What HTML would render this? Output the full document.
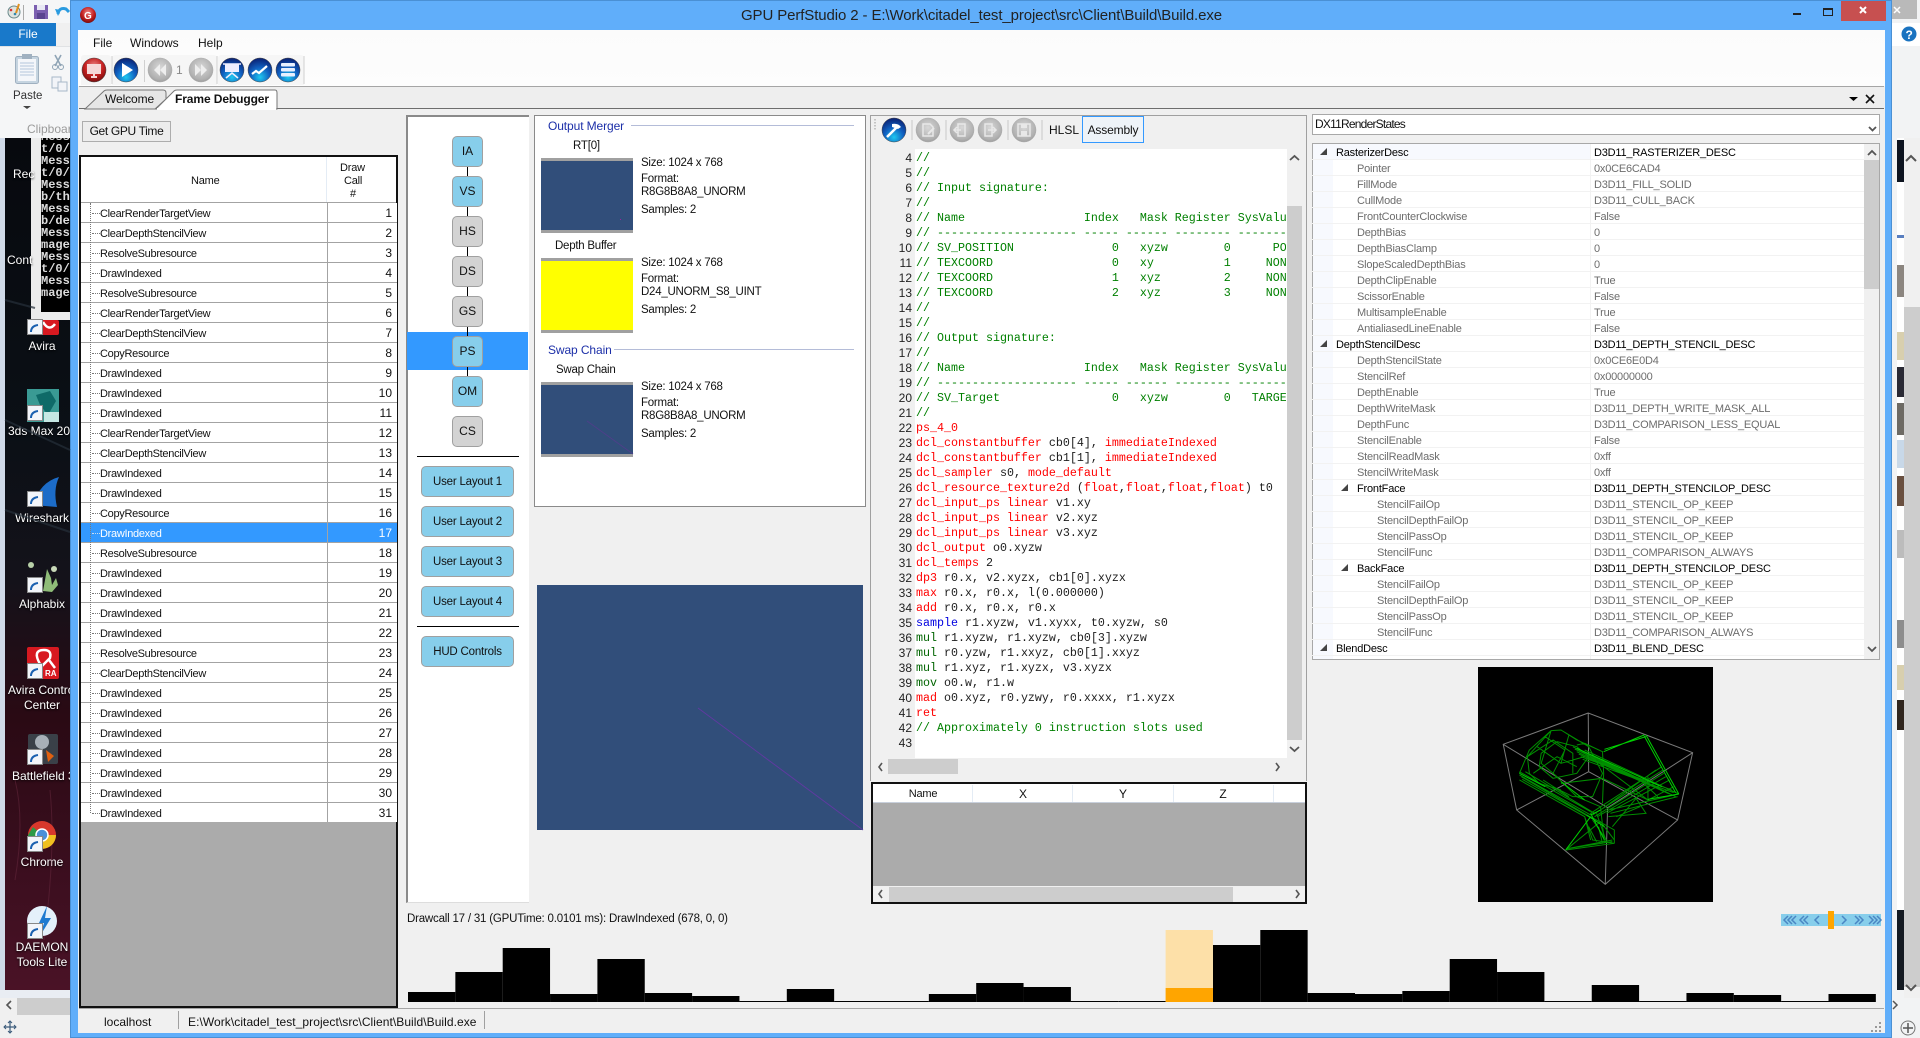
<!DOCTYPE html>
<html><head><meta charset="utf-8"><title>GPU PerfStudio 2</title>
<style>
html,body{margin:0;padding:0;width:1920px;height:1038px;overflow:hidden;background:#f0f0f0}
body{position:relative;font:11px/14px "Liberation Sans",sans-serif;color:#111}
div,span.t,pre,svg{position:absolute}
.t{white-space:nowrap;position:absolute;line-height:14px}
.w{color:#fff;width:70px;text-align:center;font-size:12px;left:7px;text-shadow:0 1px 2px #000}
.rw{position:absolute;left:0;width:316px;height:19px;border-bottom:1px solid #a3a3a3;letter-spacing:-.3px}
.rw b{font-weight:normal;position:absolute;left:19px;top:4px;white-space:nowrap}
.rw i{font-style:normal;position:absolute;right:5px;top:3px;font-size:12px;letter-spacing:0}
.rw u{position:absolute;left:11px;top:10px;width:8px;border-top:1px dotted #777}
.sel{background:#3399ff}
.nd{position:absolute;left:452px;width:29px;height:29px;border:1px solid #a0a0a0;border-radius:5px;background:#87ceeb;text-align:center;line-height:29px;font-size:12px}
.gy{background:#d3d3d3}
.ul{position:absolute;left:421px;width:91px;height:29px;border:1px solid #a0a0a0;border-radius:5px;background:#87ceeb;text-align:center;line-height:31px;font-size:11.5px;letter-spacing:-.2px}
.th{position:absolute;left:541px;width:92px;height:69px;border-top:3px solid #a0a0a0;border-bottom:3px solid #a0a0a0;background:#314e7a}
.inf{letter-spacing:-.25px;font-size:11.5px}
.hd{color:#1c2fa8;font-size:12px;letter-spacing:-.1px}
pre{margin:0;font:11.67px/15px "Liberation Mono",monospace;color:#1d1d1d;overflow:hidden}
.c{color:#008000}.r{color:#f00}.b{color:#0000e0}.g{color:#006400}
.pr{position:absolute;left:0;width:552px;height:15px;border-bottom:1px solid #f2f2f2}
.pr b,.pr i{font-weight:normal;font-style:normal;position:absolute;top:2px;white-space:nowrap;letter-spacing:-.2px;color:#6d6d6d}
.pr i{left:282px}
.pr.k b,.pr.k i{color:#000}
.pr b{left:45px}.pr.k b{left:24px}.pr.k.s b{left:45px}.pr.d b{left:65px}
.ar{position:absolute;width:0;height:0;border-style:solid;border-width:0 0 7px 7px;border-color:transparent transparent #444 transparent}
.co{position:absolute;top:0;text-align:center;width:100px;line-height:20px;font-size:12px}
</style></head><body>

<!-- right side background window -->
<div style="left:1892px;top:0;width:28px;height:1038px;background:#f2f3f4"></div>
<div style="left:1892px;top:0;width:25px;height:19px;background:#b9b9b9"></div>
<div style="left:1892px;top:23px;width:28px;height:23px;background:#fff"></div>
<div style="left:1897px;top:138px;width:7px;height:852px;background:#fff"></div>
<div style="left:1897px;top:140px;width:7px;height:42px;background:#0d1420"></div>
<div style="left:1897px;top:235px;width:7px;height:3px;background:#5a7fc0"></div>
<div style="left:1897px;top:265px;width:7px;height:32px;background:#8c8680"></div>
<div style="left:1897px;top:332px;width:7px;height:28px;background:#d8cfae"></div>
<div style="left:1897px;top:367px;width:7px;height:30px;background:#2a2a35"></div>
<div style="left:1897px;top:403px;width:7px;height:32px;background:#6d6a64"></div>
<div style="left:1897px;top:440px;width:7px;height:28px;background:#c8d8e8"></div>
<div style="left:1897px;top:476px;width:7px;height:30px;background:#6a5040"></div>
<div style="left:1897px;top:530px;width:7px;height:28px;background:#bcbcbc"></div>
<div style="left:1897px;top:620px;width:7px;height:28px;background:#8d8d8d"></div>
<div style="left:1897px;top:665px;width:7px;height:25px;background:#d8cfae"></div>
<div style="left:1897px;top:700px;width:7px;height:30px;background:#30261e"></div>
<div style="left:1897px;top:910px;width:7px;height:80px;background:#141a22"></div>
<div style="left:1904px;top:138px;width:16px;height:860px;background:#f0f0f0"></div>
<div style="left:1904px;top:307px;width:16px;height:680px;background:#cdcdcd"></div>

<!-- left background window -->
<div style="left:0;top:0;width:70px;height:1038px;background:#f0f0f0"></div>
<div style="left:0;top:0;width:70px;height:23px;background:#f5f6f7"></div>
<div style="left:0;top:23px;width:56px;height:23px;background:#1979ca;color:#fff;text-align:center;line-height:23px;font-size:12px">File</div>
<div style="left:0;top:46px;width:70px;height:92px;background:#f5f6f7;border-top:1px solid #e0e2e4;box-sizing:border-box"></div>
<span class="t" style="left:13px;top:89px;font-size:11.5px;color:#333">Paste</span>
<span class="t" style="left:27px;top:122px;font-size:12px;color:#9a9a9a;width:43px;overflow:hidden">Clipboard</span>
<div style="left:0;top:138px;width:5px;height:852px;background:#d0dae8"></div>
<div style="left:5px;top:138px;width:65px;height:852px;background:linear-gradient(180deg,#07090e 0,#0b1016 35%,#14121a 52%,#2a0a14 68%,#3a0e1e 85%,#4a1226 100%)"></div>
<div style="left:31px;top:138px;width:39px;height:182px;background:#ececec"></div>
<div style="left:41px;top:138px;width:29px;height:174px;background:#000;overflow:hidden">
<pre style="left:0;top:-7px;width:29px;height:190px;color:#ddd;font:bold 12px/12px 'Liberation Mono',monospace">Mess
t/0/
Mess
t/0/
Mess
b/th
Mess
b/de
Mess
mage
Mess
t/0/
Mess
mage</pre></div>
<span class="t w" style="left:13px;top:167px;width:auto">Rec</span>
<span class="t w" style="left:7px;top:253px;width:auto">Cont</span>
<span class="t w" style="top:339px">Avira</span>
<div style="left:0;top:424px;width:70px;height:15px;overflow:hidden"><span class="t w" style="top:0;left:8px;width:auto">3ds Max 2015</span></div>
<span class="t w" style="top:511px">Wireshark</span>
<span class="t w" style="top:597px">Alphabix</span>
<div style="left:0;top:683px;width:70px;height:30px;overflow:hidden"><span class="t w" style="top:0;left:8px;width:auto">Avira Control</span><span class="t w" style="top:15px;left:7px">Center</span></div>
<div style="left:0;top:769px;width:70px;height:15px;overflow:hidden"><span class="t w" style="top:0;left:12px;width:auto">Battlefield 3</span></div>
<span class="t w" style="top:855px">Chrome</span>
<span class="t w" style="top:940px">DAEMON</span>
<span class="t w" style="top:955px">Tools Lite</span>
<div style="left:0;top:990px;width:70px;height:8px;background:#e9edf3"></div>
<div style="left:17px;top:998px;width:53px;height:17px;background:#cdcdcd"></div>

<!-- app window -->
<div style="left:70px;top:0;width:1822px;height:1038px;background:#60aefa;border:1px solid #4a90d4;box-sizing:border-box"></div>
<span class="t" style="left:741px;top:9px;font-size:15px;letter-spacing:-.11px;color:#222">GPU PerfStudio 2 - E:\Work\citadel_test_project\src\Client\Build\Build.exe</span>
<div style="left:1841px;top:1px;width:45px;height:20px;background:#c75050"></div>
<div style="left:78px;top:30px;width:1807px;height:1003px;background:#f0f0f0"></div>
<div style="left:78px;top:30px;width:1807px;height:56px;background:linear-gradient(180deg,#fbfbfb,#fdfdfd)"></div>
<span class="t" style="left:93px;top:36px;font-size:12px">File</span>
<span class="t" style="left:130px;top:36px;font-size:12px">Windows</span>
<span class="t" style="left:198px;top:36px;font-size:12px">Help</span>
<div style="left:81px;top:55px;width:30px;height:30px;background:#f5f5f5;border-radius:3px 3px 0 0"></div>
<div style="left:112px;top:55px;width:105px;height:30px;background:#f6f6f6;border-radius:3px 3px 0 0"></div>
<div style="left:218px;top:55px;width:86px;height:30px;background:#f6f6f6;border-radius:3px 3px 0 0"></div>
<span class="t" style="left:176px;top:63px;font-size:12px;color:#888">1</span>

<!-- tab bar -->
<div style="left:79px;top:86px;width:1805px;height:23px;background:#eeeeee;border-top:1px solid #a5a5a5;border-bottom:1px solid #6d6d6d;box-sizing:border-box"></div>
<svg style="left:78px;top:85px" width="220" height="26"><path d="M7 24 L26 6 Q27 5 29 5 H85 Q88 5 88 8 V14 L77 24Z" fill="#e6e6e6" stroke="#777"/><path d="M78 24 L96 6 Q97 5 99 5 H197 Q199 5 199 8 V24Z" fill="#fff" stroke="#777"/><path d="M79 24H198" stroke="#fff" stroke-width="2"/></svg>
<span class="t" style="left:105px;top:92px;font-size:12px;letter-spacing:-.1px">Welcome</span>
<span class="t" style="left:175px;top:92px;font-size:12px;font-weight:bold;letter-spacing:-.1px">Frame Debugger</span>
<div style="left:82px;top:121px;width:87px;height:19px;background:#ededed;border:1px solid #adadad;text-align:center;line-height:19px;font-size:12px;letter-spacing:-.35px">Get GPU Time</div>

<!-- draw call table -->
<div style="left:79px;top:155px;width:319px;height:853px;box-sizing:border-box;border:2px solid #111;background:#ababab"></div>
<div style="left:81px;top:157px;width:315px;height:45px;background:#fff;border-bottom:1px solid #a3a3a3"></div>
<div style="left:326px;top:157px;width:1px;height:45px;background:#e4ecf5"></div>
<span class="t" style="left:191px;top:174px;letter-spacing:-.2px">Name</span>
<span class="t" style="left:340px;top:161px;letter-spacing:-.2px">Draw</span>
<span class="t" style="left:344px;top:174px;letter-spacing:-.2px">Call</span>
<span class="t" style="left:350px;top:187px">#</span>
<div style="left:81px;top:203px;width:316px;height:619px;background:#fff">
<div class="rw" style="top:0"><u></u><b>ClearRenderTargetView</b><i>1</i></div>
<div class="rw" style="top:20px"><u></u><b>ClearDepthStencilView</b><i>2</i></div>
<div class="rw" style="top:40px"><u></u><b>ResolveSubresource</b><i>3</i></div>
<div class="rw" style="top:60px"><u></u><b>DrawIndexed</b><i>4</i></div>
<div class="rw" style="top:80px"><u></u><b>ResolveSubresource</b><i>5</i></div>
<div class="rw" style="top:100px"><u></u><b>ClearRenderTargetView</b><i>6</i></div>
<div class="rw" style="top:120px"><u></u><b>ClearDepthStencilView</b><i>7</i></div>
<div class="rw" style="top:140px"><u></u><b>CopyResource</b><i>8</i></div>
<div class="rw" style="top:160px"><u></u><b>DrawIndexed</b><i>9</i></div>
<div class="rw" style="top:180px"><u></u><b>DrawIndexed</b><i>10</i></div>
<div class="rw" style="top:200px"><u></u><b>DrawIndexed</b><i>11</i></div>
<div class="rw" style="top:220px"><u></u><b>ClearRenderTargetView</b><i>12</i></div>
<div class="rw" style="top:240px"><u></u><b>ClearDepthStencilView</b><i>13</i></div>
<div class="rw" style="top:260px"><u></u><b>DrawIndexed</b><i>14</i></div>
<div class="rw" style="top:280px"><u></u><b>DrawIndexed</b><i>15</i></div>
<div class="rw" style="top:300px"><u></u><b>CopyResource</b><i>16</i></div>
<div class="rw sel" style="top:320px;color:#fff"><u style="border-color:#cde"></u><b>DrawIndexed</b><i>17</i></div>
<div class="rw" style="top:340px"><u></u><b>ResolveSubresource</b><i>18</i></div>
<div class="rw" style="top:360px"><u></u><b>DrawIndexed</b><i>19</i></div>
<div class="rw" style="top:380px"><u></u><b>DrawIndexed</b><i>20</i></div>
<div class="rw" style="top:400px"><u></u><b>DrawIndexed</b><i>21</i></div>
<div class="rw" style="top:420px"><u></u><b>DrawIndexed</b><i>22</i></div>
<div class="rw" style="top:440px"><u></u><b>ResolveSubresource</b><i>23</i></div>
<div class="rw" style="top:460px"><u></u><b>ClearDepthStencilView</b><i>24</i></div>
<div class="rw" style="top:480px"><u></u><b>DrawIndexed</b><i>25</i></div>
<div class="rw" style="top:500px"><u></u><b>DrawIndexed</b><i>26</i></div>
<div class="rw" style="top:520px"><u></u><b>DrawIndexed</b><i>27</i></div>
<div class="rw" style="top:540px"><u></u><b>DrawIndexed</b><i>28</i></div>
<div class="rw" style="top:560px"><u></u><b>DrawIndexed</b><i>29</i></div>
<div class="rw" style="top:580px"><u></u><b>DrawIndexed</b><i>30</i></div>
<div class="rw" style="top:600px;border-bottom:0"><u></u><b>DrawIndexed</b><i>31</i></div>
<div style="left:246px;top:0;width:1px;height:619px;background:#a3a3a3"></div>
<div style="left:9px;top:0;width:0;height:610px;border-left:1px dotted #777"></div>
</div>

<!-- pipeline -->
<div style="left:406px;top:115px;width:123px;height:788px;box-sizing:border-box;background:#fff;border-left:2px solid #8a8a8a;border-top:2px solid #8a8a8a;border-bottom:1px solid #ddd"></div>
<div style="left:407px;top:332px;width:121px;height:38px;background:#3399ff"></div>
<div style="left:467px;top:167px;width:1px;height:209px;background:#000"></div>
<div class="nd" style="top:136px">IA</div>
<div class="nd" style="top:176px">VS</div>
<div class="nd gy" style="top:216px">HS</div>
<div class="nd gy" style="top:256px">DS</div>
<div class="nd gy" style="top:296px">GS</div>
<div class="nd" style="top:336px">PS</div>
<div class="nd" style="top:376px">OM</div>
<div class="nd gy" style="top:416px">CS</div>
<div style="left:417px;top:456px;width:102px;height:1px;background:#000"></div>
<div class="ul" style="top:466px">User Layout 1</div>
<div class="ul" style="top:506px">User Layout 2</div>
<div class="ul" style="top:546px">User Layout 3</div>
<div class="ul" style="top:586px">User Layout 4</div>
<div style="left:417px;top:626px;width:102px;height:1px;background:#000"></div>
<div class="ul" style="top:636px">HUD Controls</div>

<!-- stage panel -->
<div style="left:534px;top:115px;width:332px;height:392px;box-sizing:border-box;background:#fff;border:1px solid #8a8a8a"></div>
<span class="t hd" style="left:548px;top:119px">Output Merger</span>
<div style="left:631px;top:125px;width:223px;height:1px;background:#b4bcd8"></div>
<span class="t" style="left:573px;top:139px;font-size:11.5px;letter-spacing:-.2px">RT[0]</span>
<div class="th" style="top:158px"></div>
<span class="t inf" style="left:641px;top:156px">Size: 1024 x 768</span>
<span class="t inf" style="left:641px;top:172px">Format:</span>
<span class="t inf" style="left:641px;top:185px">R8G8B8A8_UNORM</span>
<span class="t inf" style="left:641px;top:203px">Samples: 2</span>
<span class="t inf" style="left:555px;top:239px">Depth Buffer</span>
<div class="th" style="top:258px;background:#ffff00"></div>
<span class="t inf" style="left:641px;top:256px">Size: 1024 x 768</span>
<span class="t inf" style="left:641px;top:272px">Format:</span>
<span class="t inf" style="left:641px;top:285px">D24_UNORM_S8_UINT</span>
<span class="t inf" style="left:641px;top:303px">Samples: 2</span>
<span class="t hd" style="left:548px;top:343px">Swap Chain</span>
<div style="left:614px;top:349px;width:240px;height:1px;background:#b4bcd8"></div>
<span class="t inf" style="left:556px;top:363px">Swap Chain</span>
<div class="th" style="top:382px"></div>
<span class="t inf" style="left:641px;top:380px">Size: 1024 x 768</span>
<span class="t inf" style="left:641px;top:396px">Format:</span>
<span class="t inf" style="left:641px;top:409px">R8G8B8A8_UNORM</span>
<span class="t inf" style="left:641px;top:427px">Samples: 2</span>
<div style="left:537px;top:585px;width:326px;height:245px;background:#314e7a"></div>

<!-- code panel -->
<div style="left:870px;top:115px;width:437px;height:666px;box-sizing:border-box;border:1px solid #a0a0a0;border-bottom:0;background:#f0f0f0"></div>
<span class="t" style="left:1049px;top:123px;font-size:12px">HLSL</span>
<div style="left:1082px;top:116px;width:60px;height:25px;border:1px solid #3399ff;background:#eef3f8;text-align:center;line-height:27px;font-size:12px;letter-spacing:-.15px">Assembly</div>
<div style="left:915px;top:149px;width:372px;height:609px;background:#fff"></div>
<div style="left:1287px;top:206px;width:15px;height:534px;background:#cdcdcd"></div>
<pre style="left:878px;top:150.5px;width:34px;height:600px;text-align:right;font:12px/15px 'Liberation Sans',sans-serif;color:#222">4
5
6
7
8
9
10
11
12
13
14
15
16
17
18
19
20
21
22
23
24
25
26
27
28
29
30
31
32
33
34
35
36
37
38
39
40
41
42
43</pre>
<pre style="left:916px;top:150.5px;width:370px;height:600px"><span class="c">//
//
// Input signature:
//
// Name                 Index   Mask Register SysValue Format
// -------------------- ----- ------ -------- -------- ------
// SV_POSITION              0   xyzw        0      POS  float
// TEXCOORD                 0   xy          1     NONE  float
// TEXCOORD                 1   xyz         2     NONE  float
// TEXCOORD                 2   xyz         3     NONE  float
//
//
// Output signature:
//
// Name                 Index   Mask Register SysValue Format
// -------------------- ----- ------ -------- -------- ------
// SV_Target                0   xyzw        0   TARGET  float
//</span>
<span class="r">ps_4_0</span>
<span class="r">dcl_constantbuffer</span> cb0[4], <span class="r">immediateIndexed</span>
<span class="r">dcl_constantbuffer</span> cb1[1], <span class="r">immediateIndexed</span>
<span class="r">dcl_sampler</span> s0, <span class="r">mode_default</span>
<span class="r">dcl_resource_texture2d</span> (<span class="r">float</span>,<span class="r">float</span>,<span class="r">float</span>,<span class="r">float</span>) t0
<span class="r">dcl_input_ps linear</span> v1.xy
<span class="r">dcl_input_ps linear</span> v2.xyz
<span class="r">dcl_input_ps linear</span> v3.xyz
<span class="r">dcl_output</span> o0.xyzw
<span class="r">dcl_temps</span> 2
<span class="r">dp3</span> r0.x, v2.xyzx, cb1[0].xyzx
<span class="r">max</span> r0.x, r0.x, l(0.000000)
<span class="r">add</span> r0.x, r0.x, r0.x
<span class="b">sample</span> r1.xyzw, v1.xyxx, t0.xyzw, s0
<span class="g">mul</span> r1.xyzw, r1.xyzw, cb0[3].xyzw
<span class="g">mul</span> r0.yzw, r1.xxyz, cb0[1].xxyz
<span class="g">mul</span> r1.xyz, r1.xyzx, v3.xyzx
<span class="g">mov</span> o0.w, r1.w
<span class="r">mad</span> o0.xyz, r0.yzwy, r0.xxxx, r1.xyzx
<span class="r">ret</span>
<span class="c">// Approximately 0 instruction slots used</span></pre>
<div style="left:888px;top:759px;width:70px;height:15px;background:#cdcdcd"></div>

<!-- watch table -->
<div style="left:871px;top:782px;width:436px;height:122px;box-sizing:border-box;border:2px solid #111;background:#ababab"></div>
<div style="left:873px;top:784px;width:432px;height:19px;background:#fff;border-bottom:1px solid #c8d0dc;box-sizing:border-box"></div>
<div class="co" style="left:873px;top:784px;font-size:11px;letter-spacing:-.2px">Name</div>
<div class="co" style="left:973px;top:784px">X</div>
<div class="co" style="left:1073px;top:784px">Y</div>
<div class="co" style="left:1173px;top:784px">Z</div>
<div style="left:972px;top:785px;width:1px;height:17px;background:#e4ecf5"></div>
<div style="left:1072px;top:785px;width:1px;height:17px;background:#e4ecf5"></div>
<div style="left:1173px;top:785px;width:1px;height:17px;background:#e4ecf5"></div>
<div style="left:1273px;top:785px;width:1px;height:17px;background:#e4ecf5"></div>
<div style="left:873px;top:886px;width:432px;height:16px;background:#f0f0f0"></div>
<div style="left:889px;top:887px;width:344px;height:15px;background:#cdcdcd"></div>

<!-- props -->
<div style="left:1312px;top:114px;width:568px;height:21px;box-sizing:border-box;border:1px solid #a8a8a8;background:#fff;padding-left:2px;line-height:18px;font-size:12px;letter-spacing:-.78px">DX11RenderStates</div>
<div style="left:1312px;top:143px;width:568px;height:517px;box-sizing:border-box;border:1px solid #a8a8a8;background:#fff"></div>
<div style="left:1313px;top:144px;width:20px;height:515px;background:#f7f9fe"></div>
<div style="left:1333px;top:144px;width:258px;height:16px;background:#f7f9fe"></div>
<div style="left:1864px;top:144px;width:15px;height:515px;background:#f0f0f0"></div>
<div style="left:1864px;top:160px;width:15px;height:129px;background:#cdcdcd"></div>
<div style="left:1312px;top:144px;width:552px;height:516px">
<div class="pr k" style="top:0"><b>RasterizerDesc</b><i>D3D11_RASTERIZER_DESC</i></div>
<div class="pr" style="top:16px"><b>Pointer</b><i>0x0CE6CAD4</i></div>
<div class="pr" style="top:32px"><b>FillMode</b><i>D3D11_FILL_SOLID</i></div>
<div class="pr" style="top:48px"><b>CullMode</b><i>D3D11_CULL_BACK</i></div>
<div class="pr" style="top:64px"><b>FrontCounterClockwise</b><i>False</i></div>
<div class="pr" style="top:80px"><b>DepthBias</b><i>0</i></div>
<div class="pr" style="top:96px"><b>DepthBiasClamp</b><i>0</i></div>
<div class="pr" style="top:112px"><b>SlopeScaledDepthBias</b><i>0</i></div>
<div class="pr" style="top:128px"><b>DepthClipEnable</b><i>True</i></div>
<div class="pr" style="top:144px"><b>ScissorEnable</b><i>False</i></div>
<div class="pr" style="top:160px"><b>MultisampleEnable</b><i>True</i></div>
<div class="pr" style="top:176px"><b>AntialiasedLineEnable</b><i>False</i></div>
<div class="pr k" style="top:192px"><b>DepthStencilDesc</b><i>D3D11_DEPTH_STENCIL_DESC</i></div>
<div class="pr" style="top:208px"><b>DepthStencilState</b><i>0x0CE6E0D4</i></div>
<div class="pr" style="top:224px"><b>StencilRef</b><i>0x00000000</i></div>
<div class="pr" style="top:240px"><b>DepthEnable</b><i>True</i></div>
<div class="pr" style="top:256px"><b>DepthWriteMask</b><i>D3D11_DEPTH_WRITE_MASK_ALL</i></div>
<div class="pr" style="top:272px"><b>DepthFunc</b><i>D3D11_COMPARISON_LESS_EQUAL</i></div>
<div class="pr" style="top:288px"><b>StencilEnable</b><i>False</i></div>
<div class="pr" style="top:304px"><b>StencilReadMask</b><i>0xff</i></div>
<div class="pr" style="top:320px"><b>StencilWriteMask</b><i>0xff</i></div>
<div class="pr k s" style="top:336px"><b>FrontFace</b><i>D3D11_DEPTH_STENCILOP_DESC</i></div>
<div class="pr d" style="top:352px"><b>StencilFailOp</b><i>D3D11_STENCIL_OP_KEEP</i></div>
<div class="pr d" style="top:368px"><b>StencilDepthFailOp</b><i>D3D11_STENCIL_OP_KEEP</i></div>
<div class="pr d" style="top:384px"><b>StencilPassOp</b><i>D3D11_STENCIL_OP_KEEP</i></div>
<div class="pr d" style="top:400px"><b>StencilFunc</b><i>D3D11_COMPARISON_ALWAYS</i></div>
<div class="pr k s" style="top:416px"><b>BackFace</b><i>D3D11_DEPTH_STENCILOP_DESC</i></div>
<div class="pr d" style="top:432px"><b>StencilFailOp</b><i>D3D11_STENCIL_OP_KEEP</i></div>
<div class="pr d" style="top:448px"><b>StencilDepthFailOp</b><i>D3D11_STENCIL_OP_KEEP</i></div>
<div class="pr d" style="top:464px"><b>StencilPassOp</b><i>D3D11_STENCIL_OP_KEEP</i></div>
<div class="pr d" style="top:480px"><b>StencilFunc</b><i>D3D11_COMPARISON_ALWAYS</i></div>
<div class="pr k" style="top:496px"><b>BlendDesc</b><i>D3D11_BLEND_DESC</i></div>
<div style="left:278px;top:0;width:1px;height:515px;background:#f2f2f2"></div>
</div>
<div class="ar" style="left:1320px;top:148px"></div>
<div class="ar" style="left:1320px;top:340px"></div>
<div class="ar" style="left:1341px;top:484px"></div>
<div class="ar" style="left:1341px;top:564px"></div>
<div class="ar" style="left:1320px;top:644px"></div>

<span class="t" style="left:407px;top:912px;font-size:11.5px;letter-spacing:-.2px">Drawcall 17 / 31 (GPUTime: 0.0101 ms): DrawIndexed (678, 0, 0)</span>

<!-- status bar -->
<div style="left:79px;top:1008px;width:1805px;height:1px;background:#a5a5a5"></div>
<span class="t" style="left:104px;top:1015px;font-size:12px">localhost</span>
<div style="left:178px;top:1011px;width:1px;height:18px;background:#a0a0a0"></div>
<span class="t" style="left:188px;top:1015px;font-size:12px;letter-spacing:.06px">E:\Work\citadel_test_project\src\Client\Build\Build.exe</span>
<div style="left:484px;top:1011px;width:1px;height:18px;background:#a0a0a0"></div>

<!-- graphics overlay -->
<svg style="left:0;top:0" width="1920" height="1038" viewBox="0 0 1920 1038">
<defs>
<radialGradient id="gR" cx=".5" cy=".35" r=".7"><stop offset="0" stop-color="#e88"/><stop offset=".55" stop-color="#c32020"/><stop offset="1" stop-color="#6a0a0a"/></radialGradient>
<radialGradient id="gB" cx=".5" cy=".8" r=".8"><stop offset="0" stop-color="#1ec8f0"/><stop offset=".5" stop-color="#1060c0"/><stop offset="1" stop-color="#0a1f70"/></radialGradient>
<radialGradient id="gG" cx=".5" cy=".4" r=".7"><stop offset="0" stop-color="#d8d8d8"/><stop offset=".7" stop-color="#b0b0b0"/><stop offset="1" stop-color="#8e8e8e"/></radialGradient>
</defs>

<!-- window caption icons -->
<circle cx="88" cy="15" r="8" fill="url(#gR)"/><text x="84" y="19" font-family="Liberation Sans" font-size="10" font-weight="bold" fill="#fff">G</text>
<path d="M1793 14h8" stroke="#222" stroke-width="2" fill="none"/>
<rect x="1823.5" y="8.5" width="9" height="7" fill="none" stroke="#222"/><path d="M1823 9h10" stroke="#222" stroke-width="2"/>
<path d="M1860 7l6 6M1866 7l-6 6" stroke="#fff" stroke-width="2"/>
<path d="M1894 7l6 6M1900 7l-6 6" stroke="#fff" stroke-width="1.5"/>
<circle cx="1909" cy="34" r="7.5" fill="#1a73c0"/><text x="1905.5" y="39" font-family="Liberation Sans" font-size="12" font-weight="bold" fill="#fff">?</text>

<!-- quick access -->
<circle cx="14" cy="12" r="6" fill="#dfe4e0" stroke="#6b8a8c"/><circle cx="11" cy="10" r="1.3" fill="#d33"/><circle cx="15" cy="14" r="1.3" fill="#38a"/><path d="M16 13l3-9" stroke="#e09020" stroke-width="2"/>
<path d="M23.5 5v15" stroke="#aaa"/>
<rect x="34" y="5" width="14" height="14" fill="#7b5fb0"/><rect x="37" y="5" width="8" height="5" fill="#e8e8f4"/><rect x="37" y="13" width="8" height="6" fill="#5a4490"/>
<path d="M58 14q1-7 8-5l3 3" fill="none" stroke="#2a9be0" stroke-width="3"/><path d="M55 9l6 1-3 6z" fill="#2a9be0"/>

<!-- ribbon paste/cut -->
<rect x="15.5" y="56.5" width="23" height="27" rx="2" fill="#c5d4e0" stroke="#9fb0c0"/><rect x="18" y="59" width="18" height="22" fill="#f4f6fa"/><path d="M20 63h14M20 66h14M20 69h14M20 72h14M20 75h14" stroke="#b5c5dc"/><rect x="22" y="54" width="10" height="5" fill="#9fb0c0"/>
<path d="M23 106h8l-4 3z" fill="#444"/>
<path d="M55 55l6 11M61 55l-6 11" stroke="#8fa4b5" stroke-width="1.6"/><circle cx="55" cy="67" r="2.5" fill="none" stroke="#8fa4b5"/><circle cx="61" cy="67" r="2.5" fill="none" stroke="#8fa4b5"/>
<rect x="52" y="77" width="9" height="11" fill="#f2f4f8" stroke="#a8b8c8"/><rect x="58" y="82" width="9" height="9" fill="#f2f4f8" stroke="#a8b8c8"/>
<path d="M11 1001l-4 4 4 4" fill="none" stroke="#555" stroke-width="1.6"/>
<path d="M10 1021v12M4 1027h12" stroke="#3a5a7a" stroke-width="1.2"/><path d="M8 1023l2-2 2 2M8 1031l2 2 2-2M6 1025l-2 2 2 2M14 1025l2 2-2 2" stroke="#3a5a7a" fill="none"/>
<path d="M1893 1001l4 4-4 4" fill="none" stroke="#555" stroke-width="1.5"/>
<circle cx="1908" cy="1028" r="7" fill="none" stroke="#777"/><path d="M1908 1023v10M1903 1028h10" stroke="#555" stroke-width="1.5"/>
<path d="M1906 161l5-5 5 5" fill="none" stroke="#555" stroke-width="2"/>
<path d="M1906 985l5 5 5-5" fill="none" stroke="#555" stroke-width="2"/>

<!-- desktop icons -->
<path d="M5 420l65 30M5 510l65 22M5 300l30 8" stroke="#26303a" stroke-width="2" opacity=".7"/>
<path d="M15 780q10 40 0 100M50 790q6 60-6 150" stroke="#6a2a40" opacity=".5" fill="none"/>
<rect x="27" y="320" width="32" height="15" rx="2" fill="#d71920"/><path d="M43 322q6 10 12 2" stroke="#fff" stroke-width="2.5" fill="none"/>
<rect x="27" y="389" width="32" height="33" fill="#3a9a94"/><path d="M36 395l14-4 6 10-8 14-8-10z" fill="#0f6a68"/><rect x="44" y="412" width="15" height="10" fill="#c6e8e4"/>
<path d="M33 505Q40 482 59 477Q53 490 57 507Z" fill="#1c6cc8"/>
<path d="M43 591L47 569L51 578L52 585L56 578L58 585L52 592Z" fill="#8fbc78"/><circle cx="31" cy="565" r="3" fill="#b8d0a8"/><circle cx="54" cy="569" r="3" fill="#c8d8b8"/>
<rect x="27" y="647" width="32" height="32" rx="2" fill="#d71920"/><path d="M40 664q-8-14 4-14 8 0 6 8l-8 8M49 660l6 8" stroke="#fff" stroke-width="2.5" fill="none"/><text x="45" y="676" font-family="Liberation Sans" font-size="8" font-weight="bold" fill="#fff">RA</text>
<rect x="28" y="734" width="30" height="30" rx="2" fill="#3a4048"/><circle cx="42" cy="742" r="7" fill="#a8b0b8"/><path d="M46 750l8 6-6 6z" fill="#e06010"/>
<circle cx="42" cy="835" r="14" fill="#d8382c"/><path d="M42 835l14 0a14 14 0 0 1-21 12z" fill="#f0c020"/><path d="M42 835l-7 12a14 14 0 0 1-7-12l5-8z" fill="#2c9a48"/><circle cx="42" cy="835" r="6" fill="#4a90d8" stroke="#fff" stroke-width="1.5"/>
<circle cx="42" cy="921" r="15" fill="#e4f0fa"/><path d="M47 906l-8 17h5l-4 13 11-18h-6z" fill="#1f7ad0"/>
<g fill="#f2f5fa" stroke="#888"><rect x="27.5" y="319.5" width="15" height="15"/><rect x="27.5" y="405.5" width="15" height="15"/><rect x="27.5" y="491.5" width="15" height="15"/><rect x="27.5" y="577.5" width="15" height="15"/><rect x="27.5" y="663.5" width="15" height="15"/><rect x="27.5" y="749.5" width="15" height="15"/><rect x="27.5" y="836.5" width="15" height="15"/><rect x="27.5" y="923.5" width="15" height="15"/></g>
<g fill="none" stroke="#1a60b0" stroke-width="2"><path d="M31 332q0-6 7-7M31 418q0-6 7-7M31 504q0-6 7-7M31 590q0-6 7-7M31 676q0-6 7-7M31 762q0-6 7-7M31 849q0-6 7-7M31 936q0-6 7-7"/></g>

<!-- toolbar icons -->
<g stroke="#444" stroke-width=".5">
<circle cx="94" cy="70" r="12" fill="url(#gR)"/>
<circle cx="126" cy="70" r="12" fill="url(#gB)"/>
<circle cx="160" cy="70" r="12" fill="url(#gG)" stroke="#aaa"/>
<circle cx="201" cy="70" r="12" fill="url(#gG)" stroke="#aaa"/>
<circle cx="232" cy="70" r="12" fill="url(#gB)"/>
<circle cx="260" cy="70" r="12" fill="url(#gB)"/>
<circle cx="288" cy="70" r="12" fill="url(#gB)"/>
<circle cx="894" cy="130" r="12" fill="url(#gB)"/>
<circle cx="928" cy="130" r="12" fill="url(#gG)" stroke="#aaa"/>
<circle cx="962" cy="130" r="12" fill="url(#gG)" stroke="#aaa"/>
<circle cx="990" cy="130" r="12" fill="url(#gG)" stroke="#aaa"/>
<circle cx="1024" cy="130" r="12" fill="url(#gG)" stroke="#aaa"/>
</g>
<rect x="87" y="64" width="14" height="10" fill="#f6d8d8"/><path d="M91 77h6M94 74v3" stroke="#f6d8d8" stroke-width="2"/>
<path d="M122 63l11 7-11 7z" fill="#fff"/>
<path d="M160 64l-6 6 6 6zM166 64l-6 6 6 6z" fill="#eee"/>
<path d="M195 64l6 6-6 6zM201 64l6 6-6 6z" fill="#eee"/>
<rect x="225" y="64" width="14" height="8" fill="#eef"/><path d="M223 64h18M226 78l6-5 6 5" stroke="#eef" stroke-width="1.6" fill="none"/>
<path d="M252 74l4-3 3 2 8-7" stroke="#fff" stroke-width="2.2" fill="none"/>
<g fill="#e8f0ff"><rect x="281" y="63" width="14" height="3.5" rx="1"/><rect x="281" y="68" width="14" height="3.5" rx="1"/><rect x="281" y="73" width="14" height="3.5" rx="1"/></g>
<path d="M112 56v28M144.500 60v22M217 56v28M304 56v28" stroke="#d0d0d0"/>
<path d="M887 137l10-10" stroke="#fff" stroke-width="2.5"/><path d="M892 124q6-1 9 3l-3 2-3-1-3-1z" fill="#fff"/>
<path d="M923 124h7l3 3v9h-10z" fill="none" stroke="#e8e8e8" stroke-width="1.5"/><path d="M928 134l6-6" stroke="#e8e8e8" stroke-width="2"/>
<path d="M958 124h7v12h-7zM961 130h-6M957 127l-3 3 3 3" fill="none" stroke="#e8e8e8" stroke-width="1.5"/>
<path d="M985 124h7v12h-7zM988 130h7M993 127l3 3-3 3" fill="none" stroke="#e8e8e8" stroke-width="1.5"/>
<rect x="1018" y="124" width="12" height="12" fill="none" stroke="#e8e8e8" stroke-width="1.5"/><rect x="1021" y="124" width="6" height="4" fill="#e8e8e8"/><rect x="1021" y="131" width="6" height="5" fill="#e8e8e8"/>
<path d="M912 120v20M946 120v20M1008 120v20M1042 120v20" stroke="#c8c8c8"/>
<path d="M875 119v12" stroke="#999" stroke-dasharray="1.5 1.5"/>
<path d="M1849 97h9l-4.500 4z" fill="#000"/><path d="M1866 95l8 8M1874 95l-8 8" stroke="#111" stroke-width="1.6"/>
<g fill="#999"><rect x="1875" y="1030" width="2" height="2"/><rect x="1879" y="1030" width="2" height="2"/><rect x="1879" y="1026" width="2" height="2"/><rect x="1871" y="1030" width="2" height="2"/><rect x="1875" y="1026" width="2" height="2"/><rect x="1879" y="1022" width="2" height="2"/></g>

<!-- thumbs details -->
<rect x="620" y="219" width="1" height="1" fill="#a020a0"/>
<path d="M587 421l46 33" stroke="#4d3f8a" fill="none"/>
<path d="M698 708L863 830" stroke="#5f3aa0" fill="none"/>

<!-- scroll arrows -->
<path d="M1290 160l4.500-4 4.500 4" fill="none" stroke="#555" stroke-width="1.8"/>
<path d="M1290 747l4.500 4 4.500-4" fill="none" stroke="#555" stroke-width="1.8"/>
<path d="M882 763l-3 4 3 4M1276 763l3 4-3 4" fill="none" stroke="#555" stroke-width="1.6"/>
<path d="M882 890l-3 4 3 4M1296 890l3 4-3 4" fill="none" stroke="#555" stroke-width="1.6"/>
<path d="M1868 155l4-4 4 4" fill="none" stroke="#555" stroke-width="1.8"/>
<path d="M1868 647l4 4 4-4" fill="none" stroke="#555" stroke-width="1.8"/>
<path d="M1869 127l3.500 3.500 3.500-3.500" fill="none" stroke="#555" stroke-width="1.8"/>

<!-- histogram -->
<g fill="#000">
<rect x="408" y="992" width="47.35" height="10"/><rect x="455.35" y="972" width="47.35" height="30"/><rect x="502.7" y="948" width="47.35" height="54"/><rect x="550.05" y="994" width="47.35" height="8"/><rect x="597.4" y="959" width="47.35" height="43"/><rect x="644.75" y="993" width="47.35" height="9"/><rect x="692.1" y="996" width="47.35" height="6"/><rect x="739.45" y="1001" width="47.35" height="1"/><rect x="786.8" y="989" width="47.35" height="13"/><rect x="834.15" y="1001" width="47.35" height="1"/><rect x="881.5" y="1001" width="47.35" height="1"/><rect x="928.85" y="994" width="47.35" height="8"/><rect x="976.2" y="983" width="47.35" height="19"/><rect x="1023.55" y="987" width="47.35" height="15"/><rect x="1070.9" y="1001" width="47.35" height="1"/><rect x="1118.25" y="1001" width="47.35" height="1"/>
<rect x="1212.95" y="945" width="47.35" height="57"/><rect x="1260.3" y="930" width="47.35" height="72"/><rect x="1307.65" y="993" width="47.35" height="9"/><rect x="1355" y="994" width="47.35" height="8"/><rect x="1402.35" y="991" width="47.35" height="11"/><rect x="1449.7" y="959" width="47.35" height="43"/><rect x="1497.05" y="972" width="47.35" height="30"/><rect x="1544.4" y="1001" width="47.35" height="1"/><rect x="1591.75" y="985" width="47.35" height="17"/><rect x="1639.1" y="1001" width="47.35" height="1"/><rect x="1686.45" y="993" width="47.35" height="9"/><rect x="1733.8" y="995" width="47.35" height="7"/><rect x="1781.15" y="1001" width="47.35" height="1"/><rect x="1828.5" y="994" width="47.35" height="8"/>
</g>
<rect x="1165.6" y="930" width="47.35" height="58" fill="#fde0a8"/><rect x="1165.6" y="988" width="47.35" height="14" fill="#ffa500"/>

<!-- nav -->
<rect x="1781" y="914" width="100" height="12" fill="#87ceeb"/>
<rect x="1828" y="911" width="6" height="18" fill="#ffa500"/>
<g fill="none" stroke="#4a86c4" stroke-width="1.5">
<path d="M1788 916l-4 4 4 4M1792 916l-4 4 4 4M1796 916l-4 4 4 4M1804 916l-4 4 4 4M1808 916l-4 4 4 4M1819 916l-4 4 4 4M1842 916l4 4-4 4M1855 916l4 4-4 4M1859 916l4 4-4 4M1869 916l4 4-4 4M1873 916l4 4-4 4M1877 916l4 4-4 4"/>
</g>

<!-- 3D view -->
<rect x="1478" y="667" width="235" height="235" fill="#000"/>
<g transform="translate(1300,640) scale(.3954,.3333)" fill="none">
<path vector-effect="non-scaling-stroke" stroke="#7a7a7a" stroke-width="1" d="M729 219L514 313L548 510L772 733L955 540L993 338ZM729 219L730 395L548 510M730 395L955 540M514 313L778 503L993 338M778 503L772 733"/>
<g stroke="#008f00" stroke-width="1">
<path vector-effect="non-scaling-stroke" d="M635 272L660 270L700 300L765 335M635 272L580 330L555 400M635 272L575 350L580 400L605 430L660 450M635 272L610 370L650 410M650 305L610 340L605 380L640 415L700 400L730 350L700 320L650 305M660 270L730 320L765 400L740 470L690 470L640 440M700 315L720 310L765 335L768 400L765 490M575 350L640 300L690 340L690 400M600 320L660 370L720 350M590 400L650 350L700 380M620 290L670 330L640 400M680 285L660 370M615 420L680 470"/>
<path vector-effect="non-scaling-stroke" d="M690 320L915 450M695 327L920 455M700 335L930 460M705 342L935 462M710 350L940 450M715 358L945 458M720 330L958 462M725 338L950 470M730 346L880 480"/>
<path vector-effect="non-scaling-stroke" d="M555 395L735 515M555 405L735 525M560 410L740 535M562 418L745 540M570 395L745 520M555 420L720 530L740 600L795 610M720 530L735 600M735 530L795 570L795 610M740 540L775 600M750 520L775 605M730 560L750 605M755 560L765 610"/>
<path vector-effect="non-scaling-stroke" d="M735 520L915 380M740 525L918 390M745 530L920 400M752 530L925 410M760 510L900 390M775 520L935 420M780 510L958 462M785 520L955 470M850 475L875 520L780 530M850 475L790 560M672 630L795 610M676 626L790 605M680 625L790 600M672 630L760 545L795 600M760 500L770 610M660 430L765 415L880 480M640 400L700 470L760 500M880 410L880 480L945 440M860 420L905 470M800 530L860 500"/>
</g>
<g stroke="#00d000" stroke-width="1">
<path vector-effect="non-scaling-stroke" d="M875 285L958 462M870 287L950 458M768 335L870 285M770 328L875 290M672 630L735 530M700 325L915 440M735 525L760 510M660 425L720 480M725 525L770 560M555 400L620 440M958 462L880 478M735 520L770 600"/>
</g>
</g>
</svg>
</body></html>
